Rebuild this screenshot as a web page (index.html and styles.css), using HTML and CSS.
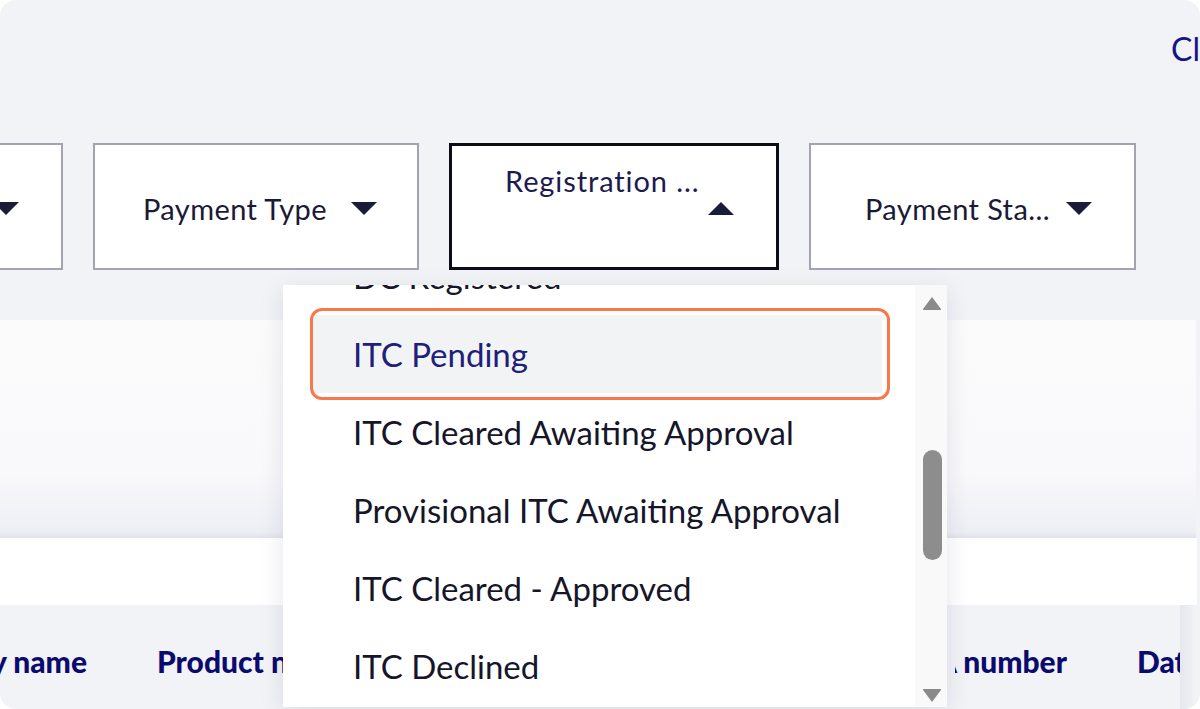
FILE: index.html
```html
<!DOCTYPE html>
<html>
<head>
<meta charset="utf-8">
<link rel="stylesheet" href="styles.css">
</head>
<body>
<div class="frame">
  <div class="top">
    <span class="clear">Clear all</span>
  </div>
  <div class="filters">
    <div class="fbox first"><span class="flabel">Product Category</span><svg class="caret" viewBox="0 0 26 13"><polygon points="0,0 26,0 13,13"/></svg></div>
    <div class="fbox"><span class="flabel">Payment Type</span><svg class="caret" viewBox="0 0 26 13"><polygon points="0,0 26,0 13,13"/></svg></div>
    <div class="fbox active">
      <div class="active-inner">
        <div class="flabel">Registration ...</div>
        <div class="caret-row"><svg class="caret" viewBox="0 0 26 13"><polygon points="0,13 26,13 13,0"/></svg></div>
      </div>
    </div>
    <div class="fbox last"><span class="flabel">Payment Sta...</span><svg class="caret" viewBox="0 0 26 13"><polygon points="0,0 26,0 13,13"/></svg></div>
  </div>
  <div class="panel"></div>
  <div class="strip"></div>
  <div class="thead">
    <div class="thead-row">
      <div class="th th-first"><span>Company name</span></div>
      <div class="th th-product">Product name</div>
      <div class="th th-number"><span>PA number</span></div>
      <div class="th th-date">Date</div>
    </div>
    <div class="thead-edge"></div>
  </div>

  <div class="dropdown">
    <div class="list">
      <div class="item">DC Registered</div>
      <div class="item hover">ITC Pending</div>
      <div class="item">ITC Cleared Awaiting Approval</div>
      <div class="item">Provisional ITC Awaiting Approval</div>
      <div class="item">ITC Cleared - Approved</div>
      <div class="item">ITC Declined</div>
    </div>
    <div class="scrollbar">
      <svg class="sarrow" viewBox="0 0 20 15"><path d="M10 1 L19 13 Q19.5 14 18 14 L2 14 Q0.5 14 1 13 Z"/></svg>
      <div class="thumb"></div>
      <svg class="sarrow down" viewBox="0 0 20 15"><path d="M10 14 L19 2 Q19.5 1 18 1 L2 1 Q0.5 1 1 2 Z"/></svg>
    </div>
    <div class="highlight"></div>
  </div>
</div>
</body>
</html>
```

FILE: styles.css
```css
* { box-sizing: border-box; }
html, body { margin: 0; padding: 0; background: #ffffff; }
body { font-family: Lato, "Open Sans", sans-serif; }

.frame {
  position: relative;
  width: 1200px;
  height: 709px;
  border-radius: 16px;
  overflow: hidden;
  background: #f2f3f6;
}

.top {
  height: 143px;
  padding-top: 27px;
  padding-left: 1171px;
  white-space: nowrap;
}
.clear {
  font-size: 32px;
  color: #15158a;
  line-height: 44px;
}

.filters {
  display: flex;
  gap: 30px;
  margin-left: -263px;
  height: 127px;
}
.fbox {
  flex: none;
  width: 326px;
  height: 127px;
  background: #ffffff;
  border: 2px solid #a2a2b0;
  display: flex;
  align-items: center;
  justify-content: center;
  gap: 24px;
  padding-left: 8px;
  padding-top: 4px;
  white-space: nowrap;
}
.fbox.first {
  justify-content: flex-end;
  padding-right: 42px;
  overflow: hidden;
}
.fbox.last { width: 327px; padding-left: 12px; gap: 16px; }
.fbox.active {
  width: 330px;
  border: 3px solid #0c0c18;
  display: block;
  padding: 15px 0 0 53px;
}
.flabel {
  font-size: 29px;
  color: #1a1a36;
  letter-spacing: 0.4px;
}
.caret {
  flex: none;
  width: 26px;
  height: 13px;
  fill: #1b1b3a;
  display: block;
}
.active-inner { width: 230px; }
.active .flabel { color: #1b1b4e; line-height: 40px; letter-spacing: 0.9px; }
.caret-row { display: flex; justify-content: flex-end; margin-top: 1px; padding-right: 1px; }

.panel {
  margin-top: 50px;
  height: 218px;
  background: linear-gradient(#fbfbfc 0%, #f9f9fb 70%, #eeeff6 97%, #e2e3ea 100%);
  margin-right: 4px;
}
.strip {
  height: 67px;
  background: #ffffff;
  margin-right: 3px;
}
.thead {
  height: 104px;
  display: flex;
}
.thead-row {
  width: 1180px;
  overflow: hidden;
  display: flex;
  gap: 70px;
  padding-top: 36px;
  white-space: nowrap;
  font-weight: 900;
  font-size: 30px;
  color: #0b0b6e;
}
.th { flex: none; line-height: 40px; }
.th-first { width: 87px; display: flex; justify-content: flex-end; overflow: hidden; }
.th-product { width: 728px; overflow: hidden; }
.th-number { width: 112px; display: flex; justify-content: flex-end; overflow: hidden; }
.thead-edge {
  width: 16px;
  background: linear-gradient(90deg, #e6e7ee, #f2f3f6);
}

.dropdown {
  position: absolute;
  left: 283px;
  top: 285px;
  width: 664px;
  height: 422px;
  background: #ffffff;
  display: flex;
  box-shadow: 0 6px 24px rgba(20, 20, 60, 0.10);
}
.list {
  flex: 1;
  overflow: hidden;
}
.item {
  height: 78px;
  margin: 0 33px 0 30px;
  padding-left: 40px;
  display: flex;
  align-items: center;
  font-size: 33px;
  color: #16162a;
  white-space: nowrap;
}
.item:first-child { margin-top: -48px; }
.item.hover {
  background: #f2f3f5;
  color: #20207a;
}
.scrollbar {
  width: 32px;
  background: #f9f9f9;
  display: flex;
  flex-direction: column;
  align-items: center;
  padding: 11px 0 4px 2px;
}
.sarrow { width: 20px; height: 15px; fill: #8a8a8a; display: block; }
.thumb {
  width: 19px;
  height: 110px;
  border-radius: 10px;
  background: #8d8d8d;
  margin-top: 139px;
}
.sarrow.down { margin-top: auto; }
.highlight {
  position: absolute;
  left: 27px;
  top: 23px;
  width: 580px;
  height: 92px;
  border: 3px solid #f7784a;
  border-radius: 12px;
}
```
